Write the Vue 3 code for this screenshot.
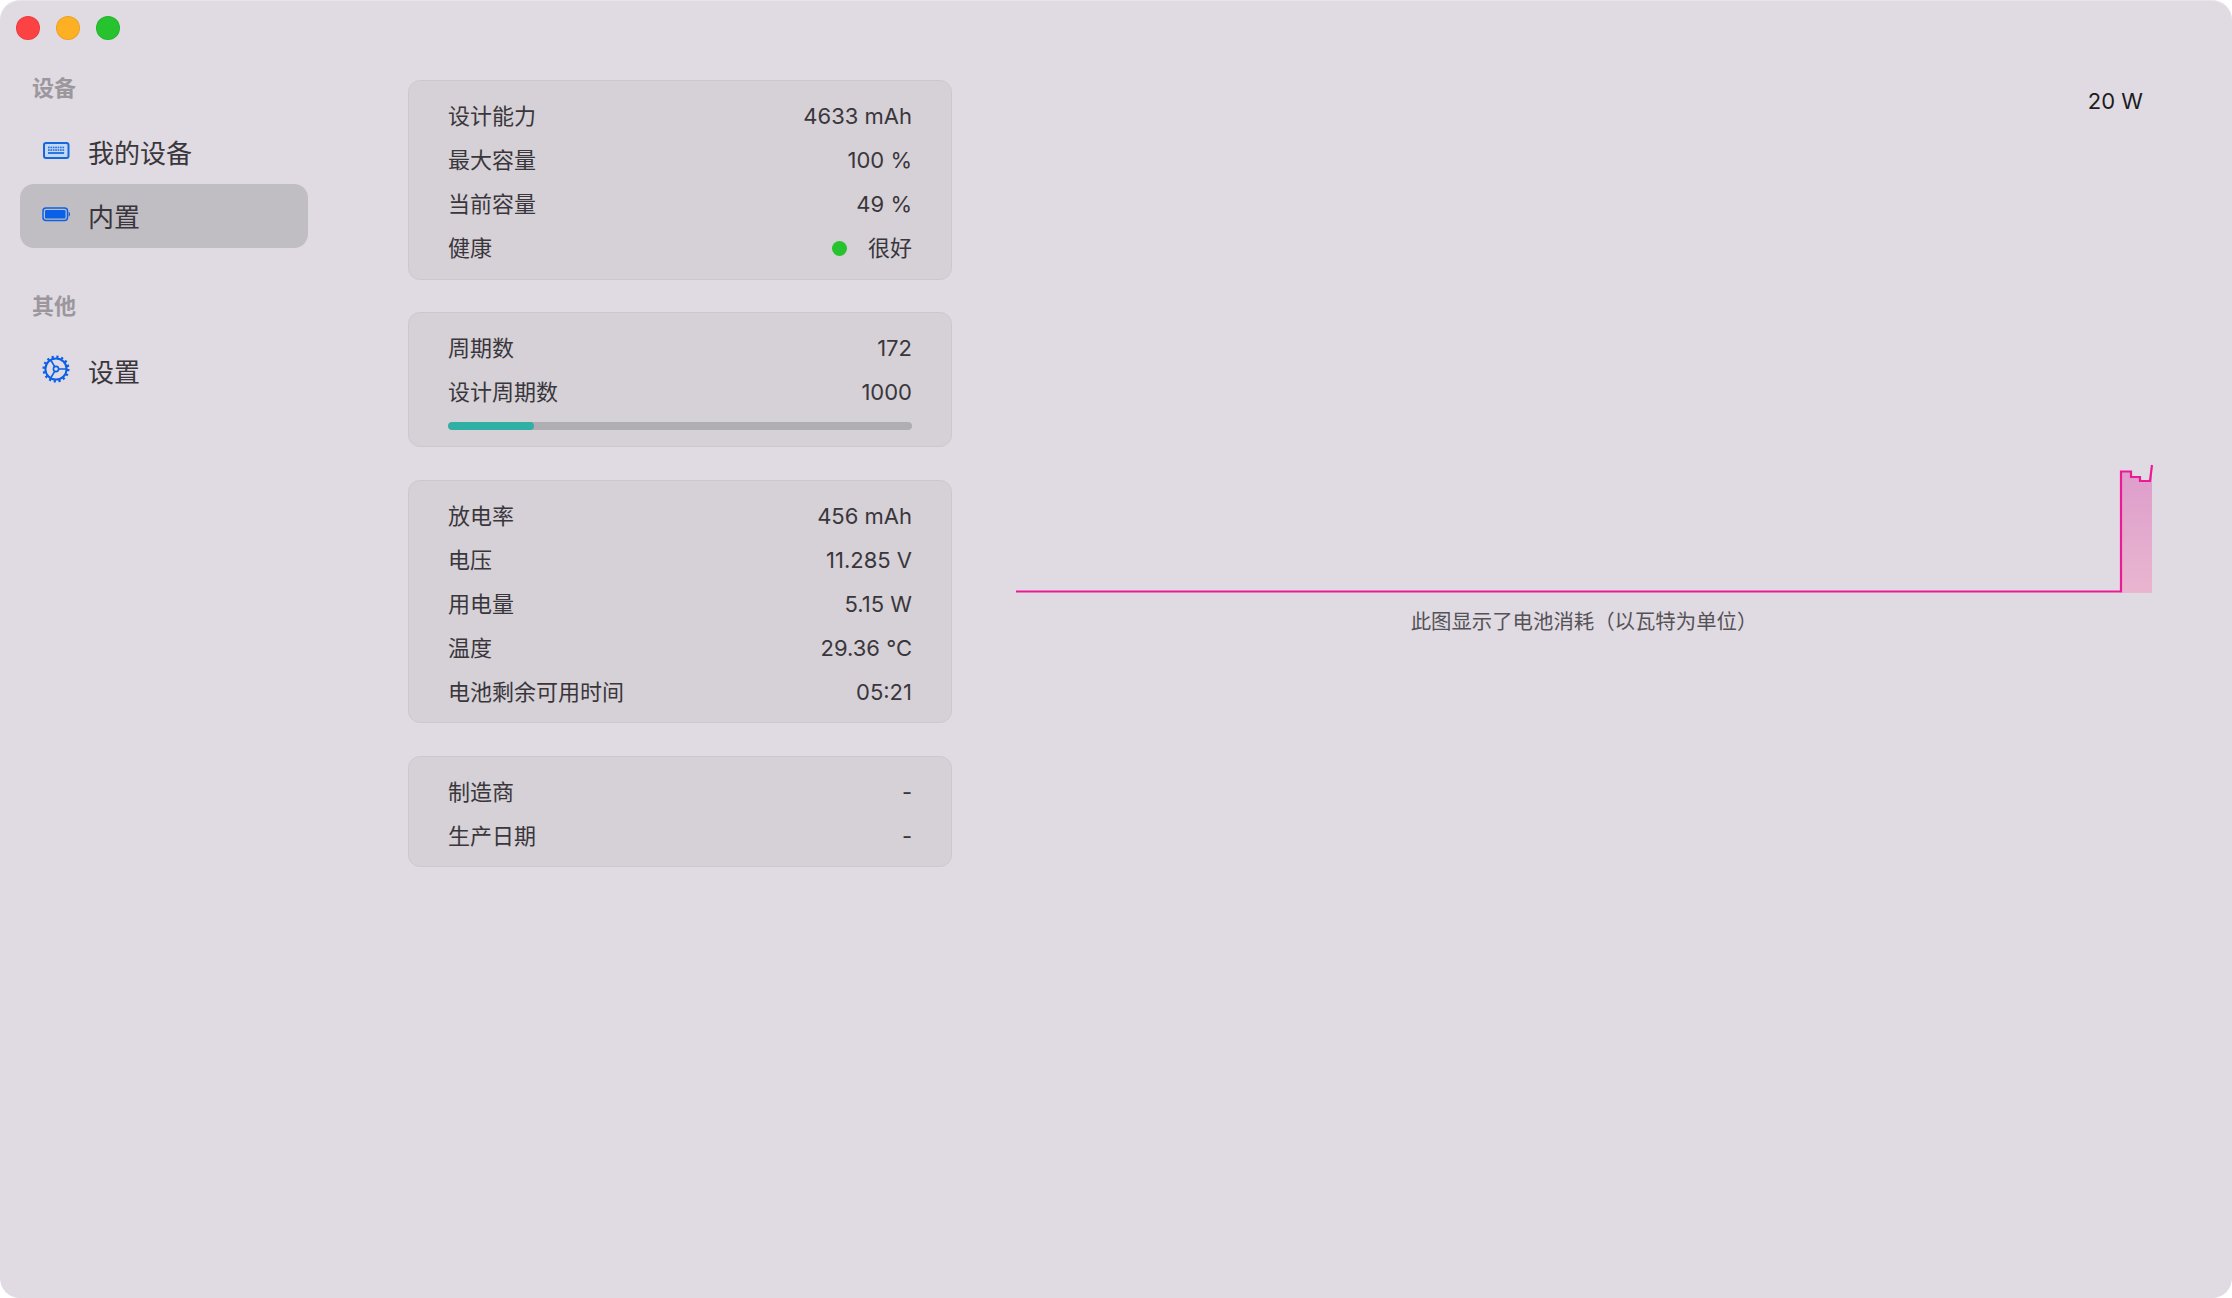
<script setup>
// 左侧菜单
const sections = [
  { title: '设备', items: [{ label: '我的设备', icon: 'keyboard' }, { label: '内置', icon: 'battery', active: true }] },
  { title: '其他', items: [{ label: '设置', icon: 'gear' }] }
]

// 电池信息
const panels = [
  { rows: [['设计能力', '4633 mAh'], ['最大容量', '100 %'], ['当前容量', '49 %'], ['健康', '很好', true]] },
  { rows: [['周期数', '172'], ['设计周期数', '1000']], progress: 18.5 },
  { rows: [['放电率', '456 mAh'], ['电压', '11.285 V'], ['用电量', '5.15 W'], ['温度', '29.36 °C'], ['电池剩余可用时间', '05:21']] },
  { rows: [['制造商', '-'], ['生产日期', '-']] }
]

const keyColumns = [6, 8.4, 10.8, 13.2, 15.6, 18, 20.4]

const linePath = 'M0 469.5H1105V349.5H1115V355H1124V359H1134L1136 343'
const fillPath = 'M1105 471V349.5H1115V355H1124V359H1134L1136 343V471Z'
</script>

<template>
  <div class="window">
    <div class="titlebar">
      <span class="light red"></span>
      <span class="light yellow"></span>
      <span class="light green"></span>
    </div>
    <div class="body">
      <aside class="sidebar">
        <section v-for="section in sections" :key="section.title" class="section">
          <div class="section-title">{{ section.title }}</div>
          <div
            v-for="item in section.items"
            :key="item.label"
            class="item"
            :class="{ active: item.active }"
          >
            <svg v-if="item.icon === 'keyboard'" class="icon" viewBox="0 0 28 28">
              <rect x="2" y="7" width="24.5" height="15" rx="2" fill="#c6d7f2" stroke="#1368e0" stroke-width="2" />
              <template v-for="y in [10.6, 13.2]" :key="y">
                <rect v-for="x in keyColumns" :key="x" :x="x" :y="y" width="1.7" height="1.7" fill="#2a76e4" />
              </template>
              <rect x="6" y="16" width="16.1" height="2" fill="#2a76e4" />
            </svg>
            <svg v-else-if="item.icon === 'battery'" class="icon" viewBox="0 0 28 28">
              <rect x="1" y="8" width="24.5" height="12.6" rx="3" fill="none" stroke="#0a60e8" stroke-width="1.5" />
              <rect x="3" y="10" width="20.5" height="8.6" rx="1.2" fill="#0a60e8" />
              <path d="M26.6 11.8c1 .4 1.4 1.3 1.4 2.5s-.4 2.1-1.4 2.5z" fill="#0a60e8" />
            </svg>
            <svg v-else class="icon" viewBox="0 0 28 28">
              <circle cx="14" cy="14" r="12.2" fill="none" stroke="#0a60e8" stroke-width="2.6" stroke-dasharray="2.2 2.59" />
              <circle cx="14" cy="14" r="10.6" fill="none" stroke="#0a60e8" stroke-width="2" />
              <circle cx="14" cy="14" r="2.6" fill="none" stroke="#0a60e8" stroke-width="1.6" />
              <path d="M16.6 14H24M12.7 11.7L9 5.5M12.7 16.3L9 22.5" fill="none" stroke="#0a60e8" stroke-width="1.6" />
            </svg>
            <span class="item-label">{{ item.label }}</span>
          </div>
        </section>
      </aside>

      <main class="panels">
        <div v-for="(panel, i) in panels" :key="i" class="panel">
          <div v-for="row in panel.rows" :key="row[0]" class="row">
            <span>{{ row[0] }}</span>
            <span class="value">
              <i v-if="row[2]" class="dot"></i>
              {{ row[1] }}
            </span>
          </div>
          <div v-if="panel.progress" class="bar">
            <div class="bar-fill" :style="{ width: panel.progress + '%' }"></div>
          </div>
        </div>
      </main>

      <div class="chart">
        <div class="chart-max">20 W</div>
        <svg class="plot" viewBox="0 0 1136 480">
          <defs>
            <linearGradient id="power" x1="0" y1="0" x2="0" y2="1">
              <stop offset="0" stop-color="#dd9ccb" />
              <stop offset="1" stop-color="#e9b6d0" />
            </linearGradient>
          </defs>
          <path :d="fillPath" fill="url(#power)" />
          <path :d="linePath" fill="none" stroke="#ec1a94" stroke-width="2.2" />
        </svg>
        <div class="caption">此图显示了电池消耗（以瓦特为单位）</div>
      </div>
    </div>
  </div>
</template>

<style>
html,
body {
  margin: 0;
  background: #fff;
}
</style>

<style scoped>
.window {
  box-sizing: border-box;
  width: 2232px;
  height: 1298px;
  background: #e0dae2;
  border-radius: 20px;
  border-top: 1px solid #e9e4ea;
  font-family: Inter, "Noto Sans CJK SC", sans-serif;
  color: #39373b;
  overflow: hidden;
}

.titlebar {
  display: flex;
  align-items: center;
  gap: 16px;
  height: 54px;
  padding-left: 16px;
}
.light {
  box-sizing: border-box;
  width: 24px;
  height: 24px;
  border-radius: 50%;
  border: 1px solid rgba(0, 0, 0, 0.08);
}
.red {
  background: #fd4244;
}
.yellow {
  background: #fdb024;
}
.green {
  background: #27c32f;
}

.body {
  display: flex;
}

.sidebar {
  box-sizing: border-box;
  flex: none;
  width: 408px;
  padding: 15px 0 0 20px;
}
.section {
  margin-bottom: 40px;
}
.section-title {
  height: 36px;
  line-height: 36px;
  margin-bottom: 15px;
  padding-left: 12px;
  font-size: 22px;
  font-weight: 700;
  color: #9b979d;
}
.section:first-child .section-title {
  margin-bottom: 14px;
}
.item {
  display: flex;
  align-items: center;
  gap: 18px;
  width: 288px;
  height: 64px;
  padding-left: 22px;
  box-sizing: border-box;
  border-radius: 14px;
  font-size: 26px;
  line-height: 60px;
}
.item-label {
  margin-top: 3px;
}
.item.active {
  background: #c1bec3;
}
.icon {
  width: 28px;
  height: 28px;
  flex: none;
  margin-top: -4px;
}

.panels {
  display: flex;
  flex-direction: column;
  gap: 32.5px;
  width: 544px;
  padding-top: 25px;
  flex: none;
}
.panel {
  padding: 13px 39px 8.5px;
  background: #d6d0d7;
  border: 1px solid #cdc8cf;
  border-radius: 12px;
  font-size: 22px;
}
.row {
  display: flex;
  justify-content: space-between;
  align-items: baseline;
  height: 44px;
  line-height: 45px;
}
.value {
  display: flex;
  align-items: center;
  gap: 20px;
}
.dot {
  width: 15px;
  height: 15px;
  margin-right: 1px;
  border-radius: 50%;
  background: #27c32f;
}
.bar {
  height: 8px;
  margin: 7.5px 0 8px;
  background: #b0aeb2;
  border-radius: 4px;
  overflow: hidden;
}
.bar-fill {
  height: 100%;
  background: #30b0a4;
  border-radius: 4px;
}

.chart {
  flex: none;
  width: 1136px;
  margin-left: 64px;
  padding-top: 25px;
}
.chart-max {
  height: 42px;
  line-height: 43px;
  padding-right: 9px;
  text-align: right;
  font-size: 22px;
  color: #1d1c1e;
}
.plot {
  display: block;
  width: 1136px;
  height: 480px;
  overflow: visible;
}
.caption {
  margin-top: 6px;
  height: 28px;
  line-height: 28px;
  text-align: center;
  font-size: 20.4px;
  color: #555257;
}
</style>
